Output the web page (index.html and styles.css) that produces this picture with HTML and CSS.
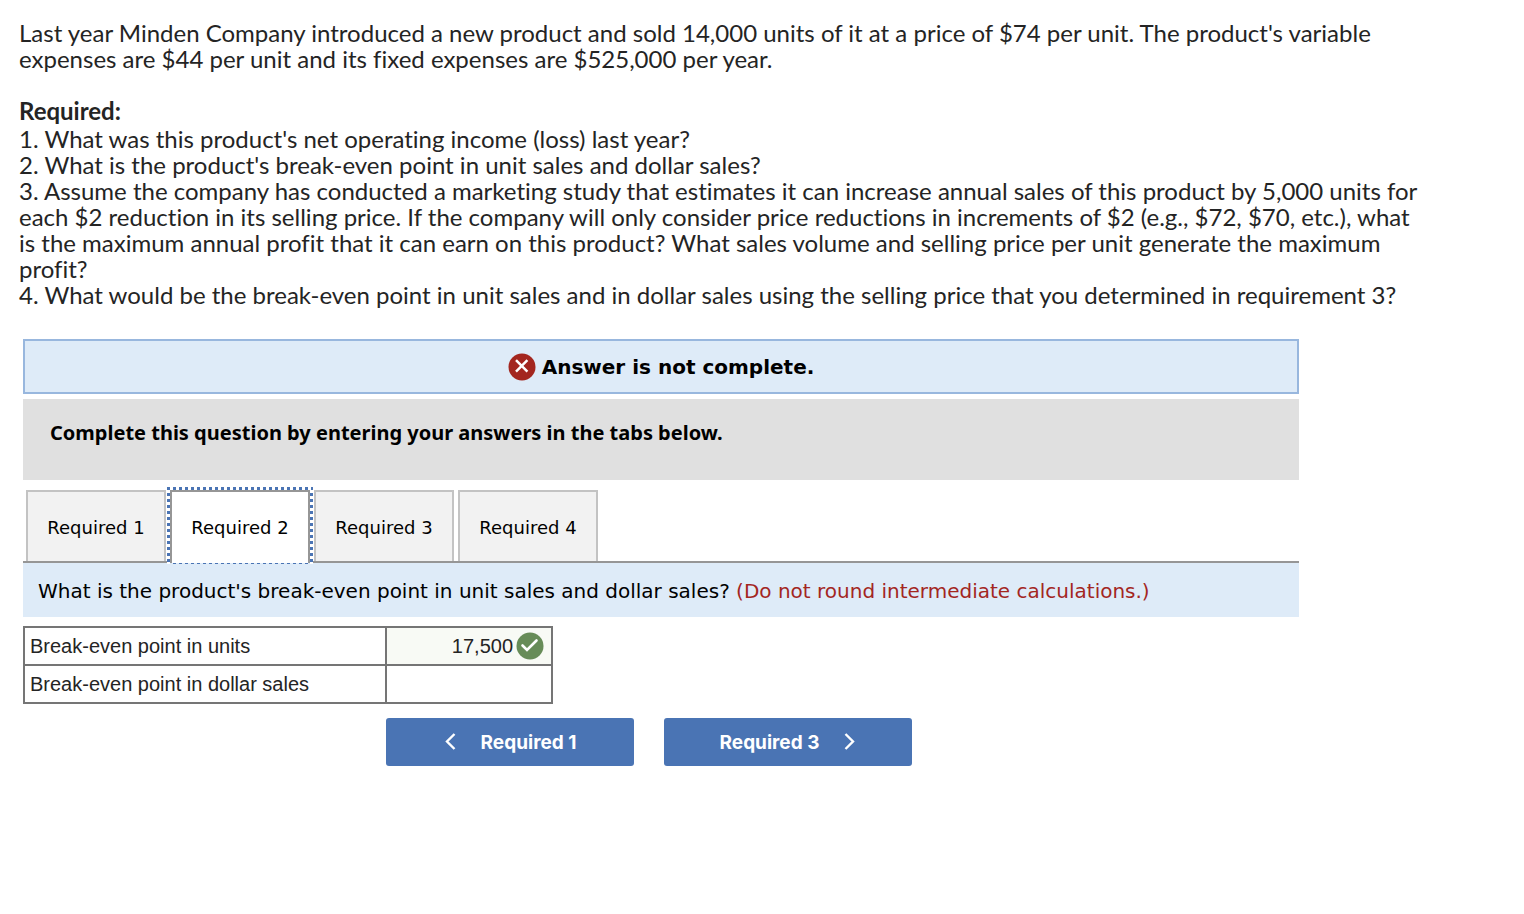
FILE: index.html
```
<!DOCTYPE html>
<html lang="en">
<head>
<meta charset="utf-8">
<title>Break-even analysis</title>
<link rel="stylesheet" href="styles.css">
</head>
<body>
  <div id="question">
    <p>Last year Minden Company introduced a new product and sold 14,000 units of it at a price of $74 per unit. The product's variable<br>
      expenses are $44 per unit and its fixed expenses are $525,000 per year.</p>
    <h3>Required:</h3>
    <p>1. What was this product's net operating income (loss) last year?<br>
      2. What is the product's break-even point in unit sales and dollar sales?<br>
      3. Assume the company has conducted a marketing study that estimates it can increase annual sales of this product by 5,000 units for<br>
      each $2 reduction in its selling price. If the company will only consider price reductions in increments of $2 (e.g., $72, $70, etc.), what<br>
      is the maximum annual profit that it can earn on this product? What sales volume and selling price per unit generate the maximum<br>
      profit?<br>
      4. What would be the break-even point in unit sales and in dollar sales using the selling price that you determined in requirement 3?</p>
  </div>

  <div id="answer">
    <div class="status">
      <svg width="28" height="28" viewBox="0 0 28 28">
        <circle cx="14" cy="14" r="13.5" fill="#a3261f"/>
        <path d="M8 7.2L19.4 18.6M19.4 7.2L8 18.6" stroke="#fff" stroke-width="2.5" fill="none"/>
      </svg>
      <span>Answer is not complete.</span>
    </div>
    <div class="instructions">Complete this question by entering your answers in the tabs below.</div>

    <div class="tabs">
      <button type="button">Required 1</button>
      <button type="button" class="active">Required 2</button>
      <button type="button">Required 3</button>
      <button type="button">Required 4</button>
    </div>
    <div class="prompt">What is the product's break-even point in unit sales and dollar sales? <span class="note">(Do not round intermediate calculations.)</span></div>

    <table>
      <tr>
        <th scope="row"><label for="units">Break-even point in units</label></th>
        <td class="correct">
          <div class="entry">
            <input type="text" id="units" value="17,500">
            <svg width="28" height="28" viewBox="0 0 28 28">
              <circle cx="14" cy="14" r="13.5" fill="#678c58"/>
              <path d="M6.5 13.5L11 18L20.5 8.5" stroke="#fff" stroke-width="2.6" fill="none" stroke-linecap="round"/>
            </svg>
          </div>
        </td>
      </tr>
      <tr>
        <th scope="row"><label for="dollars">Break-even point in dollar sales</label></th>
        <td><div class="entry"><input type="text" id="dollars"></div></td>
      </tr>
    </table>

    <div class="nav">
      <button type="button">
        <svg width="12" height="18" viewBox="0 0 12 18"><path d="M10.5 1L3 8.5L10.5 16" stroke="#fff" stroke-width="2.4" fill="none"/></svg>
        <span>Required 1</span>
      </button>
      <button type="button">
        <span>Required 3</span>
        <svg width="12" height="18" viewBox="0 0 12 18"><path d="M1.5 1L9 8.5L1.5 16" stroke="#fff" stroke-width="2.4" fill="none"/></svg>
      </button>
    </div>
  </div>
</body>
</html>
```
FILE: styles.css
```
body {
margin: 0;
padding: 20px 0;
background-color: white;
}

#question {
margin: 0 20px 31px 19px;
color: #242424;
font: 24px/26px Lato, sans-serif;
font-variant-ligatures: none;
}

#question p {
margin: 0;
}

#question h3 {
margin: 26px 0 2px;
font-size: 24px;
}

#answer {
margin: 0 225px 0 23px;
font-family: "DejaVu Sans", Verdana, sans-serif;
color: black;
}

.status {
display: flex;
align-items: center;
justify-content: center;
gap: 6px;
height: 51px;
border: 2px solid #98b7de;
background-color: #deebf8;
font-size: 20px;
font-weight: bold;
}

.instructions {
margin: 5px 0 10px;
padding: 20px 27px 33px;
background-color: #e0e0e0;
font: bold 20px/28px "Noto Sans", Tahoma, sans-serif;
}

.tabs {
display: flex;
gap: 4px;
padding-left: 3px;
border-bottom: 2px solid #969696;
}

.tabs button {
position: relative;
width: 140px;
height: 71px;
padding: 1px 0 0;
border: 2px solid #c3c3c3;
border-bottom: 0;
background-color: #f2f2f2;
color: black;
font: 18px "DejaVu Sans", Verdana, sans-serif;
}

.tabs .active {
height: 73px;
margin-bottom: -2px;
padding: 0 0 1px;
border-color: #969696;
background-color: white;
}

/* dotted focus ring round the current tab */
.tabs .active::before {
content: "";
position: absolute;
inset: -5px -5px -1px;
background:
repeating-linear-gradient(90deg, #4a74b4 0 3px, #fff 3px 6px) 0 0 / 100% 3px no-repeat,
repeating-linear-gradient(#4a74b4 0 3px, #fff 3px 6px) 0 0 / 3px 100% no-repeat,
repeating-linear-gradient(#4a74b4 0 3px, #fff 3px 6px) 100% 0 / 3px 100% no-repeat,
repeating-linear-gradient(90deg, #4a74b4 0 3px, #deebf8 3px 6px) 0 100% / 100% 1px no-repeat;
}

.prompt {
padding: 15px 15px 13px;
background-color: #deebf8;
font-size: 20px;
line-height: 26px;
}

.note {
color: #a3261f;
}

table {
width: 530px;
margin-top: 9px;
table-layout: fixed;
border-collapse: collapse;
font: 20px "Liberation Sans", Arial, sans-serif;
color: #242424;
}

th, td {
height: 36px;
padding: 0;
border: 2px solid #757575;
}

th {
width: 355px;
padding-left: 5px;
font-weight: normal;
text-align: left;
}

.correct {
background-color: #f8faf5;
}

.entry {
display: flex;
align-items: center;
gap: 3px;
padding-right: 7px;
}

.entry input {
flex: 1;
min-width: 0;
padding: 0;
border: 0;
background: none;
color: inherit;
font: inherit;
text-align: right;
}

.nav {
display: flex;
gap: 30px;
margin: 14px 0 0 363px;
}

.nav button {
display: flex;
align-items: center;
justify-content: center;
gap: 25px;
width: 248px;
height: 48px;
border: 0;
border-radius: 3px;
background-color: #4a74b4;
color: white;
font: bold 19px Inter, sans-serif;
}
```
